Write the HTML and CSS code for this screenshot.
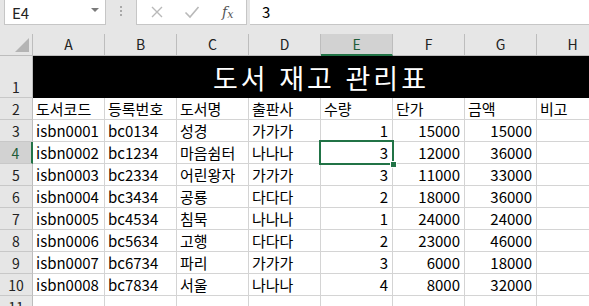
FILE: index.html
```html
<!DOCTYPE html>
<html lang="ko">
<head>
    <meta charset="UTF-8">
    <meta name="viewport" content="width=device-width, initial-scale=1.0">
    <title>도서 재고 관리표</title>
    <link rel="stylesheet" href="styles.css">
</head>
<body>
    <div class="formula-bar">
        <div class="name-box">
            <span>E4</span>
            <span class="caret"></span>
        </div>
        <div class="grip"><i></i><i></i><i></i></div>
        <div class="fx-buttons">
            <svg class="btn-icon" width="14" height="14" viewBox="0 0 14 14"><path d="M2 2 L12 12 M12 2 L2 12" stroke="#b9b9b9" stroke-width="1.4" fill="none"/></svg>
            <svg class="btn-icon" width="16" height="14" viewBox="0 0 16 14"><path d="M1.5 7.5 L6 12 L14.5 2" stroke="#b9b9b9" stroke-width="1.6" fill="none"/></svg>
            <span class="fx">f<sub>x</sub></span>
        </div>
        <div class="formula-input">3</div>
    </div>

    <div class="sheet">
        <div class="row head-row">
            <div class="corner"><span class="tri"></span></div>
            <div class="col-head">A</div>
            <div class="col-head">B</div>
            <div class="col-head">C</div>
            <div class="col-head">D</div>
            <div class="col-head active">E</div>
            <div class="col-head">F</div>
            <div class="col-head">G</div>
            <div class="col-head">H</div>
        </div>
        <div class="row title-row">
            <div class="row-head">1</div>
            <div class="title">도서 재고 관리표</div>
        </div>
        <div class="row">
            <div class="row-head">2</div>
            <div class="cell">도서코드</div>
            <div class="cell">등록번호</div>
            <div class="cell">도서명</div>
            <div class="cell">출판사</div>
            <div class="cell">수량</div>
            <div class="cell">단가</div>
            <div class="cell">금액</div>
            <div class="cell">비고</div>
        </div>
        <div class="row">
            <div class="row-head">3</div>
            <div class="cell">isbn0001</div>
            <div class="cell">bc0134</div>
            <div class="cell">성경</div>
            <div class="cell">가가가</div>
            <div class="cell num">1</div>
            <div class="cell num">15000</div>
            <div class="cell num">15000</div>
            <div class="cell"></div>
        </div>
        <div class="row">
            <div class="row-head active">4</div>
            <div class="cell">isbn0002</div>
            <div class="cell">bc1234</div>
            <div class="cell">마음쉼터</div>
            <div class="cell">나나나</div>
            <div class="cell num selected">3</div>
            <div class="cell num">12000</div>
            <div class="cell num">36000</div>
            <div class="cell"></div>
        </div>
        <div class="row">
            <div class="row-head">5</div>
            <div class="cell">isbn0003</div>
            <div class="cell">bc2334</div>
            <div class="cell">어린왕자</div>
            <div class="cell">가가가</div>
            <div class="cell num">3</div>
            <div class="cell num">11000</div>
            <div class="cell num">33000</div>
            <div class="cell"></div>
        </div>
        <div class="row">
            <div class="row-head">6</div>
            <div class="cell">isbn0004</div>
            <div class="cell">bc3434</div>
            <div class="cell">공룡</div>
            <div class="cell">다다다</div>
            <div class="cell num">2</div>
            <div class="cell num">18000</div>
            <div class="cell num">36000</div>
            <div class="cell"></div>
        </div>
        <div class="row">
            <div class="row-head">7</div>
            <div class="cell">isbn0005</div>
            <div class="cell">bc4534</div>
            <div class="cell">침묵</div>
            <div class="cell">나나나</div>
            <div class="cell num">1</div>
            <div class="cell num">24000</div>
            <div class="cell num">24000</div>
            <div class="cell"></div>
        </div>
        <div class="row">
            <div class="row-head">8</div>
            <div class="cell">isbn0006</div>
            <div class="cell">bc5634</div>
            <div class="cell">고행</div>
            <div class="cell">다다다</div>
            <div class="cell num">2</div>
            <div class="cell num">23000</div>
            <div class="cell num">46000</div>
            <div class="cell"></div>
        </div>
        <div class="row">
            <div class="row-head">9</div>
            <div class="cell">isbn0007</div>
            <div class="cell">bc6734</div>
            <div class="cell">파리</div>
            <div class="cell">가가가</div>
            <div class="cell num">3</div>
            <div class="cell num">6000</div>
            <div class="cell num">18000</div>
            <div class="cell"></div>
        </div>
        <div class="row">
            <div class="row-head">10</div>
            <div class="cell">isbn0008</div>
            <div class="cell">bc7834</div>
            <div class="cell">서울</div>
            <div class="cell">나나나</div>
            <div class="cell num">4</div>
            <div class="cell num">8000</div>
            <div class="cell num">32000</div>
            <div class="cell"></div>
        </div>
        <div class="row">
            <div class="row-head">11</div>
            <div class="cell"></div>
            <div class="cell"></div>
            <div class="cell"></div>
            <div class="cell"></div>
            <div class="cell"></div>
            <div class="cell"></div>
            <div class="cell"></div>
            <div class="cell"></div>
        </div>
    </div>
</body>
</html>
```

FILE: styles.css
```css
body {
    margin: 0;
    padding: 0;
    background-color: #e6e6e6;
    font-family: "Noto Sans CJK KR", "Noto Sans", sans-serif;
    color: #000;
    overflow: hidden;
    height: 306px;
}
.formula-bar {
    display: flex;
    height: 25px;
    margin-bottom: 9px;
}
.name-box {
    box-sizing: border-box;
    width: 102px;
    margin-left: 4px;
    height: 25px;
    background-color: #fff;
    border: 1px solid #c6c6c6;
    border-top: none;
    display: flex;
    align-items: center;
    justify-content: space-between;
    padding: 0 6px 0 7px;
    font-size: 15px;
    color: #222;
}
.caret {
    width: 0;
    height: 0;
    border-left: 4px solid transparent;
    border-right: 4px solid transparent;
    border-top: 4px solid #7a7a7a;
    margin-top: -4px;
}
.grip {
    width: 30px;
    display: flex;
    flex-direction: column;
    align-items: center;
    justify-content: center;
    gap: 2px;
    padding-bottom: 4px;
}
.grip i {
    width: 2px;
    height: 2px;
    background-color: #a8a8a8;
}
.fx-buttons {
    box-sizing: border-box;
    width: 111px;
    height: 25px;
    background-color: #fff;
    border: 1px solid #c6c6c6;
    border-top: none;
    display: flex;
    align-items: center;
    padding-left: 13px;
    gap: 20px;
}
.fx {
    font-family: "DejaVu Serif", "Liberation Serif", serif;
    font-style: italic;
    font-size: 14px;
    color: #555;
    margin-left: 2px;
}
.fx sub {
    font-size: 11px;
    vertical-align: -1px;
}
.formula-input {
    flex: 1;
    box-sizing: border-box;
    height: 25px;
    margin-left: 3px;
    background-color: #fff;
    border-bottom: 1px solid #c6c6c6;
    padding-left: 12px;
    font-size: 15px;
    line-height: 24px;
}

.sheet {
    background-color: #fff;
    width: 609px;
}
.row {
    display: flex;
    height: 22px;
}
.head-row {
    background-color: #e6e6e6;
}
.corner {
    box-sizing: border-box;
    width: 33px;
    height: 22px;
    border-right: 1px solid #bdbdbd;
    border-bottom: 1px solid #bdbdbd;
    position: relative;
}
.tri {
    position: absolute;
    right: 3px;
    bottom: 3px;
    width: 0;
    height: 0;
    border-left: 14px solid transparent;
    border-bottom: 14px solid #b4b4b4;
}
.col-head {
    box-sizing: border-box;
    width: 72px;
    height: 22px;
    border-right: 1px solid #bdbdbd;
    border-bottom: 1px solid #bdbdbd;
    text-align: center;
    font-size: 14px;
    line-height: 21px;
    color: #222;
}
.col-head.active {
    background-color: #d2d2d2;
    border-bottom: 2px solid #217346;
    color: #1e5c38;
}
.row-head {
    box-sizing: border-box;
    flex: none;
    width: 33px;
    background-color: #e6e6e6;
    border-right: 1px solid #bdbdbd;
    border-bottom: 1px solid #c8c8c8;
    text-align: center;
    font-size: 14px;
    line-height: 20px;
    display: flex;
    align-items: flex-end;
    justify-content: center;
    color: #222;
}
.row-head.active {
    background-color: #d2d2d2;
    border-right: 2px solid #217346;
    color: #1e5c38;
}
.title-row {
    height: 42px;
}
.title {
    box-sizing: border-box;
    width: 576px;
    background-color: #000;
    color: #fff;
    font-size: 27px;
    letter-spacing: 3px;
    line-height: 36px;
    display: flex;
    align-items: flex-end;
    justify-content: center;
    padding-bottom: 2px;
}
.cell {
    box-sizing: border-box;
    flex: none;
    width: 72px;
    border-right: 1px solid #d4d4d4;
    border-bottom: 1px solid #d4d4d4;
    padding: 0 3px 0 3px;
    font-size: 15px;
    line-height: 20px;
    display: flex;
    align-items: flex-end;
    white-space: nowrap;
    overflow: hidden;
}
.cell.num {
    justify-content: flex-end;
    padding-right: 4px;
}
.cell.selected {
    position: relative;
    overflow: visible;
}
.cell.selected::before {
    content: "";
    position: absolute;
    left: -2px;
    top: -2px;
    right: -2px;
    bottom: -2px;
    border: 2px solid #217346;
}
.cell.selected::after {
    content: "";
    position: absolute;
    right: -5px;
    bottom: -5px;
    width: 5px;
    height: 5px;
    background-color: #217346;
    border: 1px solid #fff;
}
```
